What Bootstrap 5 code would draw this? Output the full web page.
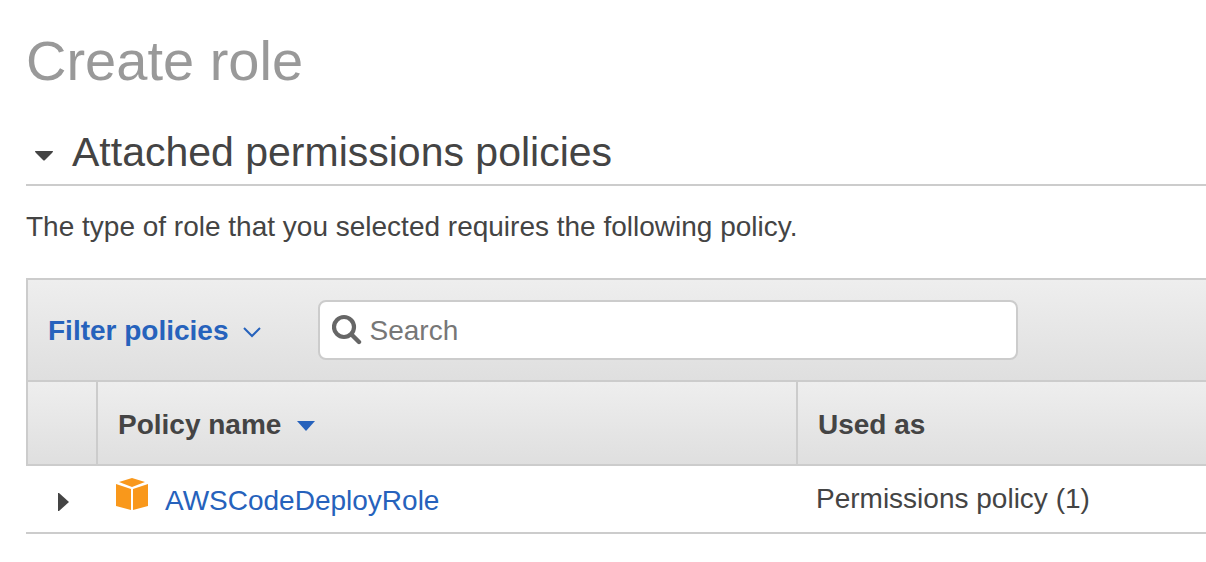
<!DOCTYPE html>
<html lang="en">
<head>
<meta charset="utf-8">
<meta name="viewport" content="width=device-width, initial-scale=1">
<title>Create role</title>
<link href="https://cdn.jsdelivr.net/npm/bootstrap@5.3.0/dist/css/bootstrap.min.css" rel="stylesheet">
<style>
  :root { --line: #ccc; --ink: #444; --blue: #2662bc; }
  body {
    font: 400 28px/40px "Liberation Sans", Arial, sans-serif;
    color: var(--ink);
    background: #fff;
  }
  main { padding: 28px 0 24px 26px; }
  .plain-btn { border: 0; background: none; padding: 0; }
  .page-title { font-size: 56px; line-height: 66px; font-weight: 400; color: #999; margin-bottom: 34px; }
  .section-head { border-bottom: 2px solid var(--line); padding-bottom: 8px; margin-bottom: 21px; }
  .section-head h2 { font-size: 41px; line-height: 48px; font-weight: 400; }
  .section-toggle { color: inherit; padding-left: 8px; gap: 18px; }
  .intro { margin-bottom: 31px; }
  .shade { background: linear-gradient(#eee, #dfdfdf); }
  .toolbar { border: solid var(--line); border-width: 2px 0 2px 2px; padding: 20px; gap: 57px; }
  .filter-btn { color: var(--blue); font-weight: 700; gap: 14px; padding-top: 2px; }
  .search-box { flex: 0 1 700px; height: 60px; border: 2px solid var(--line); border-radius: 8px; background: #fff; padding: 0 12px; gap: 8px; }
  .search-box input { border: 0; outline: 0; padding: 2px 0 0; min-width: 0; background: none; color: var(--ink); }
  .search-box input::placeholder { color: #777; opacity: 1; }
  .policies { table-layout: fixed; border-collapse: separate; border-spacing: 0; }
  .policies th { height: 84px; padding: 4px 20px 0; font-weight: 700; border-bottom: 2px solid var(--line); border-left: 2px solid var(--line); }
  .policies td { padding: 13px 20px; border-bottom: 2px solid var(--line); vertical-align: top; }
  .policies .col-toggle { width: 70px; }
  .policies .col-name { width: 700px; }
  .policies .cell-toggle { padding: 16px 0 0 32px; }
  .policies .cell-name { padding: 12px 20px 11px; }
  .cell-name a { color: var(--blue); text-decoration: none; margin: 3px 0 0 1px; }
  .cell-name a:hover { text-decoration: underline; }
  .sort-btn { font-weight: 700; color: inherit; gap: 16px; }
</style>
</head>
<body>
<main>
  <h1 class="page-title">Create role</h1>
  <section>
    <div class="section-head">
      <h2 class="mb-0">
        <button type="button" class="plain-btn section-toggle d-flex align-items-center" aria-expanded="true">
          <svg width="20" height="20" viewBox="0 0 20 20" aria-hidden="true"><path d="M1 9h18q0 1-1 2l-7 7q-1 1-2 0l-7-7Q1 10 1 9Z" fill="#444"/></svg>
          <span>Attached permissions policies</span>
        </button>
      </h2>
    </div>
    <p class="intro">The type of role that you selected requires the following policy.</p>

    <div class="toolbar shade d-flex align-items-center">
      <button type="button" class="plain-btn filter-btn d-flex align-items-center text-nowrap">
        Filter policies
        <svg width="18" height="14" viewBox="0 0 18 14" aria-hidden="true"><path d="M1 4l8 8 8-8" fill="none" stroke="#2662bc" stroke-width="2"/></svg>
      </button>
      <div class="search-box d-flex align-items-center">
        <svg class="flex-shrink-0" width="30" height="32" viewBox="0 0 30 32" aria-hidden="true"><g fill="none" stroke="#666"><circle cx="12" cy="13" r="10" stroke-width="4.200"/><path d="M19.500 20.500l7.500 7.500" stroke-width="4.400" stroke-linecap="round"/></g></svg>
        <input type="search" class="flex-grow-1" placeholder="Search" aria-label="Search policies">
      </div>
    </div>

    <table class="policies w-100">
      <colgroup><col class="col-toggle"><col class="col-name"><col></colgroup>
      <thead>
        <tr>
          <th class="shade" aria-label="Details"></th>
          <th class="shade" scope="col">
            <button type="button" class="plain-btn sort-btn d-flex align-items-center">
              Policy name
              <svg width="18" height="12" viewBox="0 0 18 12" aria-hidden="true"><path d="M0 2h18l-9 10Z" fill="#2662bc"/></svg>
            </button>
          </th>
          <th class="shade" scope="col">Used as</th>
        </tr>
      </thead>
      <tbody>
        <tr>
          <td class="cell-toggle">
            <button type="button" class="plain-btn d-flex align-items-center" aria-label="Expand AWSCodeDeployRole">
              <svg width="12" height="40" viewBox="0 0 12 40" aria-hidden="true"><path d="M0 11h1l10 9-10 9H0Z" fill="#444"/></svg>
            </button>
          </td>
          <td class="cell-name">
            <div class="d-flex align-items-start gap-3">
              <svg class="flex-shrink-0" width="32" height="32" viewBox="0 0 32 32" aria-hidden="true"><g fill="#f9981b"><path d="M16 0l13 4-13 5L3 4Z"/><path d="M0 6l15 5v21L0 28Z"/><path d="M32 6l-15 5v21l15-4Z"/></g></svg>
              <a href="#">AWSCodeDeployRole</a>
            </div>
          </td>
          <td>Permissions policy (1)</td>
        </tr>
      </tbody>
    </table>
  </section>
</main>
<script src="https://cdn.jsdelivr.net/npm/bootstrap@5.3.0/dist/js/bootstrap.bundle.min.js"></script>
</body>
</html>
